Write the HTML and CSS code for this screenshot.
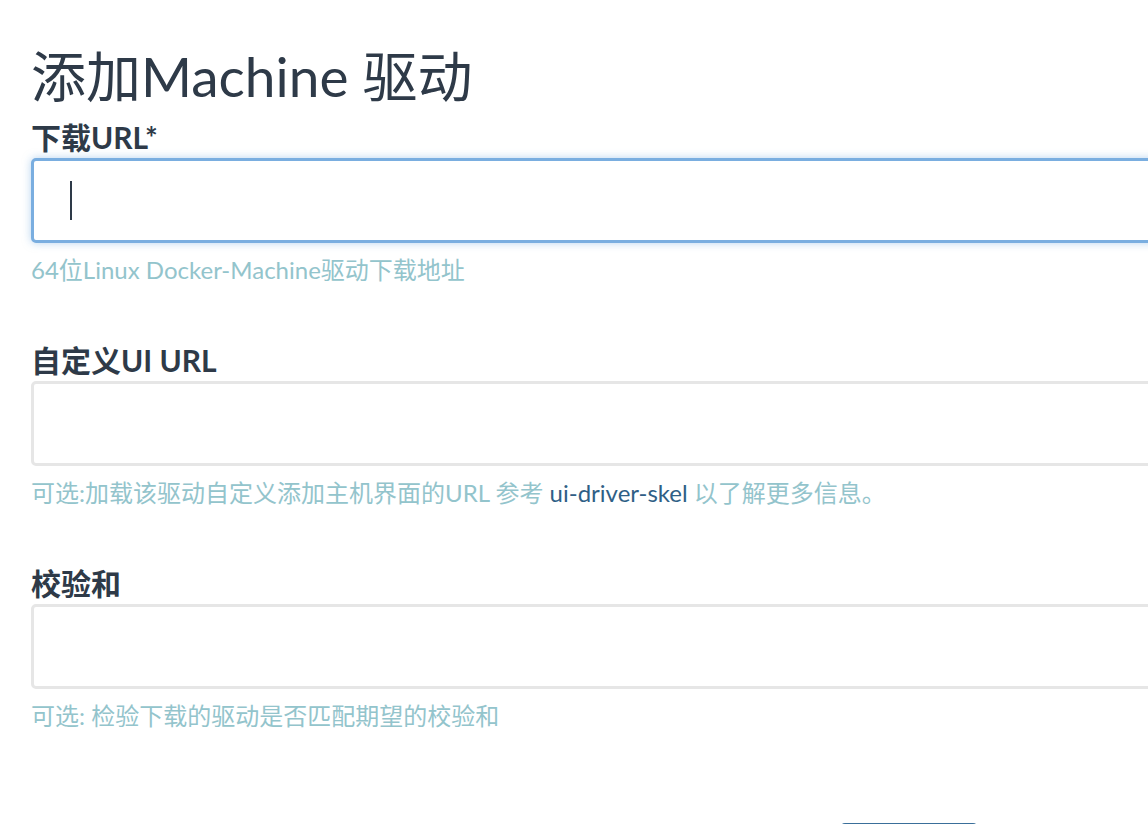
FILE: index.html
```html
<!DOCTYPE html>
<html lang="zh-CN">
<head>
<meta charset="utf-8">
<title>添加Machine 驱动</title>
<link rel="stylesheet" href="styles.css">
</head>
<body>
<div class="page">
  <h1 class="title">添加Machine 驱动</h1>

  <div class="field">
    <label class="label">下载URL*</label>
    <div class="input focused"><span class="caret"></span></div>
    <p class="help">64位Linux Docker-Machine驱动下载地址</p>
  </div>

  <div class="field">
    <label class="label">自定义UI URL</label>
    <div class="input"></div>
    <p class="help">可选:加载该驱动自定义添加主机界面的URL 参考 <a class="link" href="#">ui-driver-skel</a> 以了解更多信息。</p>
  </div>

  <div class="field">
    <label class="label">校验和</label>
    <div class="input"></div>
    <p class="help">可选: 检验下载的驱动是否匹配期望的校验和</p>
  </div>

  <div class="footer">
    <button class="btn" type="button">创建</button>
  </div>
</div>
</body>
</html>
```

FILE: styles.css
```css
html, body {
  margin: 0;
  padding: 0;
  background: #ffffff;
  overflow: hidden;
}

.page {
  width: 1300px;
  padding: 40px 0 0 31px;
  font-family: Lato, "Noto Sans CJK SC", sans-serif;
  color: #2e3a48;
}

.title {
  margin: 0 0 7px;
  font-size: 55px;
  font-weight: 400;
  line-height: 72px;
}

.field {
  display: flex;
  flex-direction: column;
  margin-bottom: 57px;
}

.label {
  font-size: 30px;
  font-weight: 700;
  line-height: 36px;
  margin-bottom: 3px;
}

.input {
  box-sizing: border-box;
  height: 85px;
  border: 3px solid #e6e6e6;
  border-radius: 5px;
  background: #fff;
  display: flex;
  align-items: center;
  padding-left: 36px;
}

.input.focused {
  border-color: #7aaee0;
  box-shadow: 0 0 8px rgba(122, 174, 224, 0.55);
}

.caret {
  display: block;
  width: 2px;
  height: 39px;
  background: #2e3a48;
}

.help {
  margin: 12px 0 0;
  font-size: 24px;
  line-height: 30px;
  color: #93c4cc;
}

.link {
  color: #2f5f86;
  text-decoration: none;
}

.footer {
  display: flex;
  padding-left: 810px;
  margin-top: 92px;
}

.btn {
  width: 136px;
  height: 60px;
  border: 0;
  border-radius: 4px;
  background: #3a6f9a;
  color: #fff;
  font-family: Lato, "Noto Sans CJK SC", sans-serif;
  font-size: 22px;
  padding-top: 20px;
}
```
